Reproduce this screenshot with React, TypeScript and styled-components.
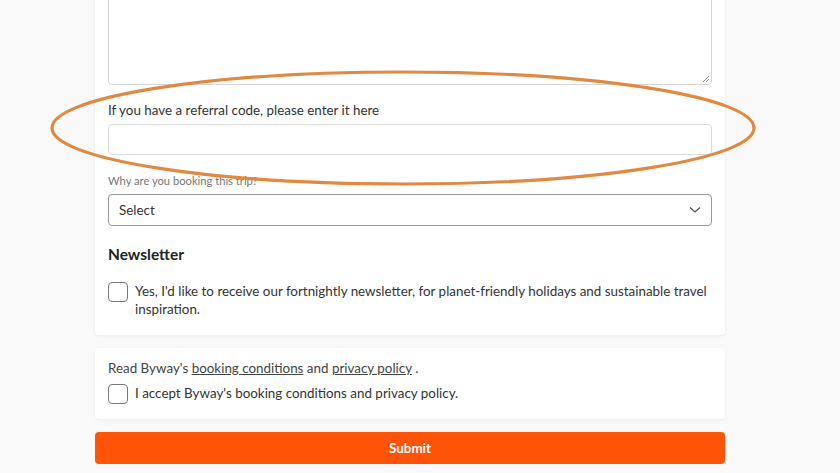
import React from "react";
import styled, { createGlobalStyle } from "styled-components";

const GlobalStyle = createGlobalStyle`
  html, body {
    margin: 0;
    padding: 0;
    background: #f9f9f9;
    font-family: Lato, "Noto Sans", sans-serif;
    color: #333;
    overflow: hidden;
  }
`;

const Page = styled.div`
  position: relative;
  width: 840px;
  height: 473px;
  padding: 0 115px 0 95px;
  box-sizing: border-box;
  display: flex;
  flex-direction: column;
`;

const Card = styled.section<{ $top?: number; $bottom?: number }>`
  background: #fff;
  border-radius: 4px;
  box-shadow: 0 1px 3px rgba(0, 0, 0, 0.06);
  padding: 11px 13px ${(p) => p.$bottom ?? 17}px 13px;
  margin-top: ${(p) => p.$top ?? 13}px;
  display: flex;
  flex-direction: column;
`;

const TextArea = styled.div`
  height: 123px;
  border: 1px solid #d6d6d6;
  border-radius: 4px;
  position: relative;
`;

const Grip = styled.svg`
  position: absolute;
  right: 1px;
  bottom: 1px;
`;

const Label = styled.label<{ $small?: boolean }>`
  display: block;
  font-size: ${(p) => (p.$small ? 11.2 : 13.4)}px;
  line-height: 18px;
  color: ${(p) => (p.$small ? "#777" : "#333")};
  margin: ${(p) => (p.$small ? "17px 0 4px" : "16px 0 5px")};
`;

const Input = styled.div`
  height: 31px;
  border: 1px solid #dcdcdc;
  border-radius: 4px;
  box-sizing: border-box;
`;

const Select = styled.div`
  height: 32px;
  border: 1px solid #999;
  border-radius: 4px;
  box-sizing: border-box;
  display: flex;
  align-items: center;
  justify-content: space-between;
  padding: 0 10px;
  font-size: 13.4px;
  color: #333;
`;

const Heading = styled.h3`
  font-size: 15.5px;
  font-weight: 700;
  color: #222;
  margin: 19px 0 19px;
  line-height: 18px;
`;

const CheckRow = styled.label`
  display: flex;
  align-items: flex-start;
  gap: 7px;
  font-size: 13.4px;
  line-height: 18px;
  color: #333;
`;

const Box = styled.span`
  flex: none;
  width: 20px;
  height: 20px;
  border: 1px solid #777;
  border-radius: 4px;
  box-sizing: border-box;
`;

const Read = styled.p`
  margin: 0 0 7px;
  font-size: 13.4px;
  line-height: 18px;
  color: #444;
`;

const Link = styled.a`
  color: #444;
  text-decoration: underline;
`;

const Submit = styled.button`
  margin-top: 13px;
  height: 32px;
  border: none;
  border-radius: 4px;
  background: #ff5308;
  color: #fff;
  font-family: inherit;
  font-size: 13.4px;
  font-weight: 700;
`;

const Annotation = styled.svg`
  position: absolute;
  left: 0;
  top: 0;
  pointer-events: none;
`;

export default function App() {
  return (
    <>
      <GlobalStyle />
      <Page>
        <Card $top={-51}>
          <TextArea>
            <Grip width="8" height="8" viewBox="0 0 8 8">
              <path d="M7 1 L1 7 M7 4 L4 7" stroke="#888" strokeWidth="1" />
            </Grip>
          </TextArea>
          <Label>If you have a referral code, please enter it here</Label>
          <Input />
          <Label $small>Why are you booking this trip?</Label>
          <Select>
            <span>Select</span>
            <svg width="12" height="8" viewBox="0 0 12 8">
              <path d="M1 1.5 L6 6 L11 1.5" fill="none" stroke="#555" strokeWidth="1.3" />
            </svg>
          </Select>
          <Heading>Newsletter</Heading>
          <CheckRow>
            <Box />
            <span>
              Yes, I'd like to receive our fortnightly newsletter, for planet-friendly holidays and sustainable travel
              inspiration.
            </span>
          </CheckRow>
        </Card>
        <Card $bottom={15}>
          <Read>
            Read Byway's <Link>booking conditions</Link> and <Link>privacy policy</Link> .
          </Read>
          <CheckRow>
            <Box />
            <span>I accept Byway's booking conditions and privacy policy.</span>
          </CheckRow>
        </Card>
        <Submit>Submit</Submit>
        <Annotation width="840" height="473" viewBox="0 0 840 473">
          <ellipse cx="403" cy="128" rx="351" ry="56" fill="none" stroke="#e08940" strokeWidth="3.2" />
        </Annotation>
      </Page>
    </>
  );
}
